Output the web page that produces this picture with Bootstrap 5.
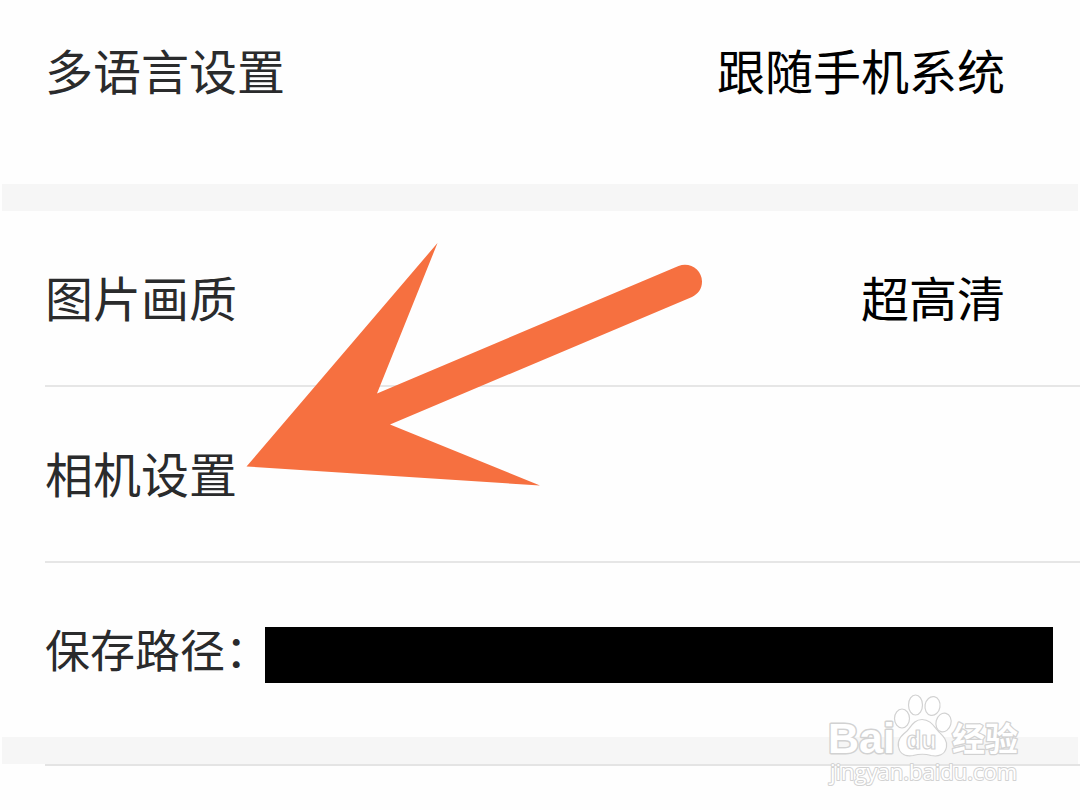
<!DOCTYPE html>
<html lang="zh-CN">
<head>
<meta charset="utf-8">
<meta name="viewport" content="width=device-width, initial-scale=1">
<title>设置</title>
<link rel="stylesheet" href="https://cdn.jsdelivr.net/npm/bootstrap@5.3.0/dist/css/bootstrap.min.css">
<style>
  body { font-family: "Noto Sans CJK SC", sans-serif; background: #fefefe; color: #2a2b2c; overflow-x: hidden; }
  .settings { font-size: 48px; line-height: 72px; }
  .setting-row { color: inherit; padding: 49px 75px 53px 0; margin-left: 45px; }
  .setting-row.first-row { padding-top: 33px; padding-bottom: 79px; }
  .setting-row + .setting-row { border-top: 2px solid #e6e6e6; }
  .setting-row.path-row { font-size: 45px; line-height: 68px; padding: 52px 27px 54px 0; }
  .setting-value { color: #000; }
  .path-label { width: 220px; }
  .path-mask { height: 56px; background: #000; }
  .section-gap { height: 27px; margin: 0 2px; background: #f6f6f6; }
  .next-section { border-top: 2px solid #e4e4e4; margin-left: 45px; height: 46px; }
  .pointer-arrow { left: 240px; top: 236px; width: 470px; height: 256px; pointer-events: none; }
  .watermark { right: 54px; bottom: 14px; width: 202px; height: 104px; pointer-events: none; }
</style>
</head>
<body>
<main class="settings position-relative overflow-hidden">
  <a href="#language" class="setting-row first-row d-flex justify-content-between align-items-center text-decoration-none">
    <span>多语言设置</span><span class="setting-value">跟随手机系统</span>
  </a>
  <div class="section-gap"></div>
  <section>
    <a href="#quality" class="setting-row d-flex justify-content-between align-items-center text-decoration-none">
      <span>图片画质</span><span class="setting-value">超高清</span>
    </a>
    <a href="#camera" class="setting-row d-flex align-items-center text-decoration-none">
      <span>相机设置</span>
    </a>
    <div class="setting-row path-row d-flex align-items-end">
      <span class="path-label flex-shrink-0 text-nowrap">保存路径：</span>
      <div class="path-mask flex-grow-1"></div>
    </div>
  </section>
  <div class="section-gap"></div>
  <div class="next-section"></div>

  <svg class="pointer-arrow position-absolute" viewBox="240 236 470 256" aria-hidden="true">
    <path fill="#f67040" d="M246.500 466.500 437.500 243 377 393.500 678.500 266C690 261.500 702 270 702 281.500C702 289 698 294 692 297L390 424.500 540 485.500Z"/>
  </svg>

  <svg class="watermark position-absolute" viewBox="824 692 202 104" role="img" aria-label="Baidu 经验" fill="#fff" stroke="#d2d2d2" stroke-width="1.200" stroke-linejoin="round">
    <g paint-order="stroke">
      <text x="828" y="753" font-family="Liberation Sans, sans-serif" font-weight="700" font-size="43" stroke-width="3">Bai</text>
      <text x="952" y="751" font-family="Noto Sans CJK SC, sans-serif" font-weight="700" font-size="33" stroke-width="2.500">经验</text>
      <text x="830" y="780" font-family="Open Sans, sans-serif" font-size="22" stroke-width="2">jingyan.baidu.com</text>
    </g>
    <ellipse cx="902" cy="718.500" rx="7.500" ry="9.500"/>
    <ellipse cx="915.500" cy="705" rx="7" ry="10"/>
    <ellipse cx="932.500" cy="706" rx="7.500" ry="9.500" transform="rotate(10 932.500 706)"/>
    <ellipse cx="943.500" cy="722.500" rx="7.500" ry="9.500" transform="rotate(15 943.500 722.500)"/>
    <path d="M922 719.500C914 719.500 911 727 907 731C901 736 897 740 898.500 747C900 755 907 756.500 913 755.500C919 754 926 754 931 755.500C938 757 945 755 946.500 747C947.500 740 943 736 939 732C934 727 931 719.500 922 719.500Z"/>
    <text x="906" y="749" font-family="Liberation Sans, sans-serif" font-weight="700" font-size="25">du</text>
  </svg>
</main>
<script src="https://cdn.jsdelivr.net/npm/bootstrap@5.3.0/dist/js/bootstrap.bundle.min.js"></script>
</body>
</html>
